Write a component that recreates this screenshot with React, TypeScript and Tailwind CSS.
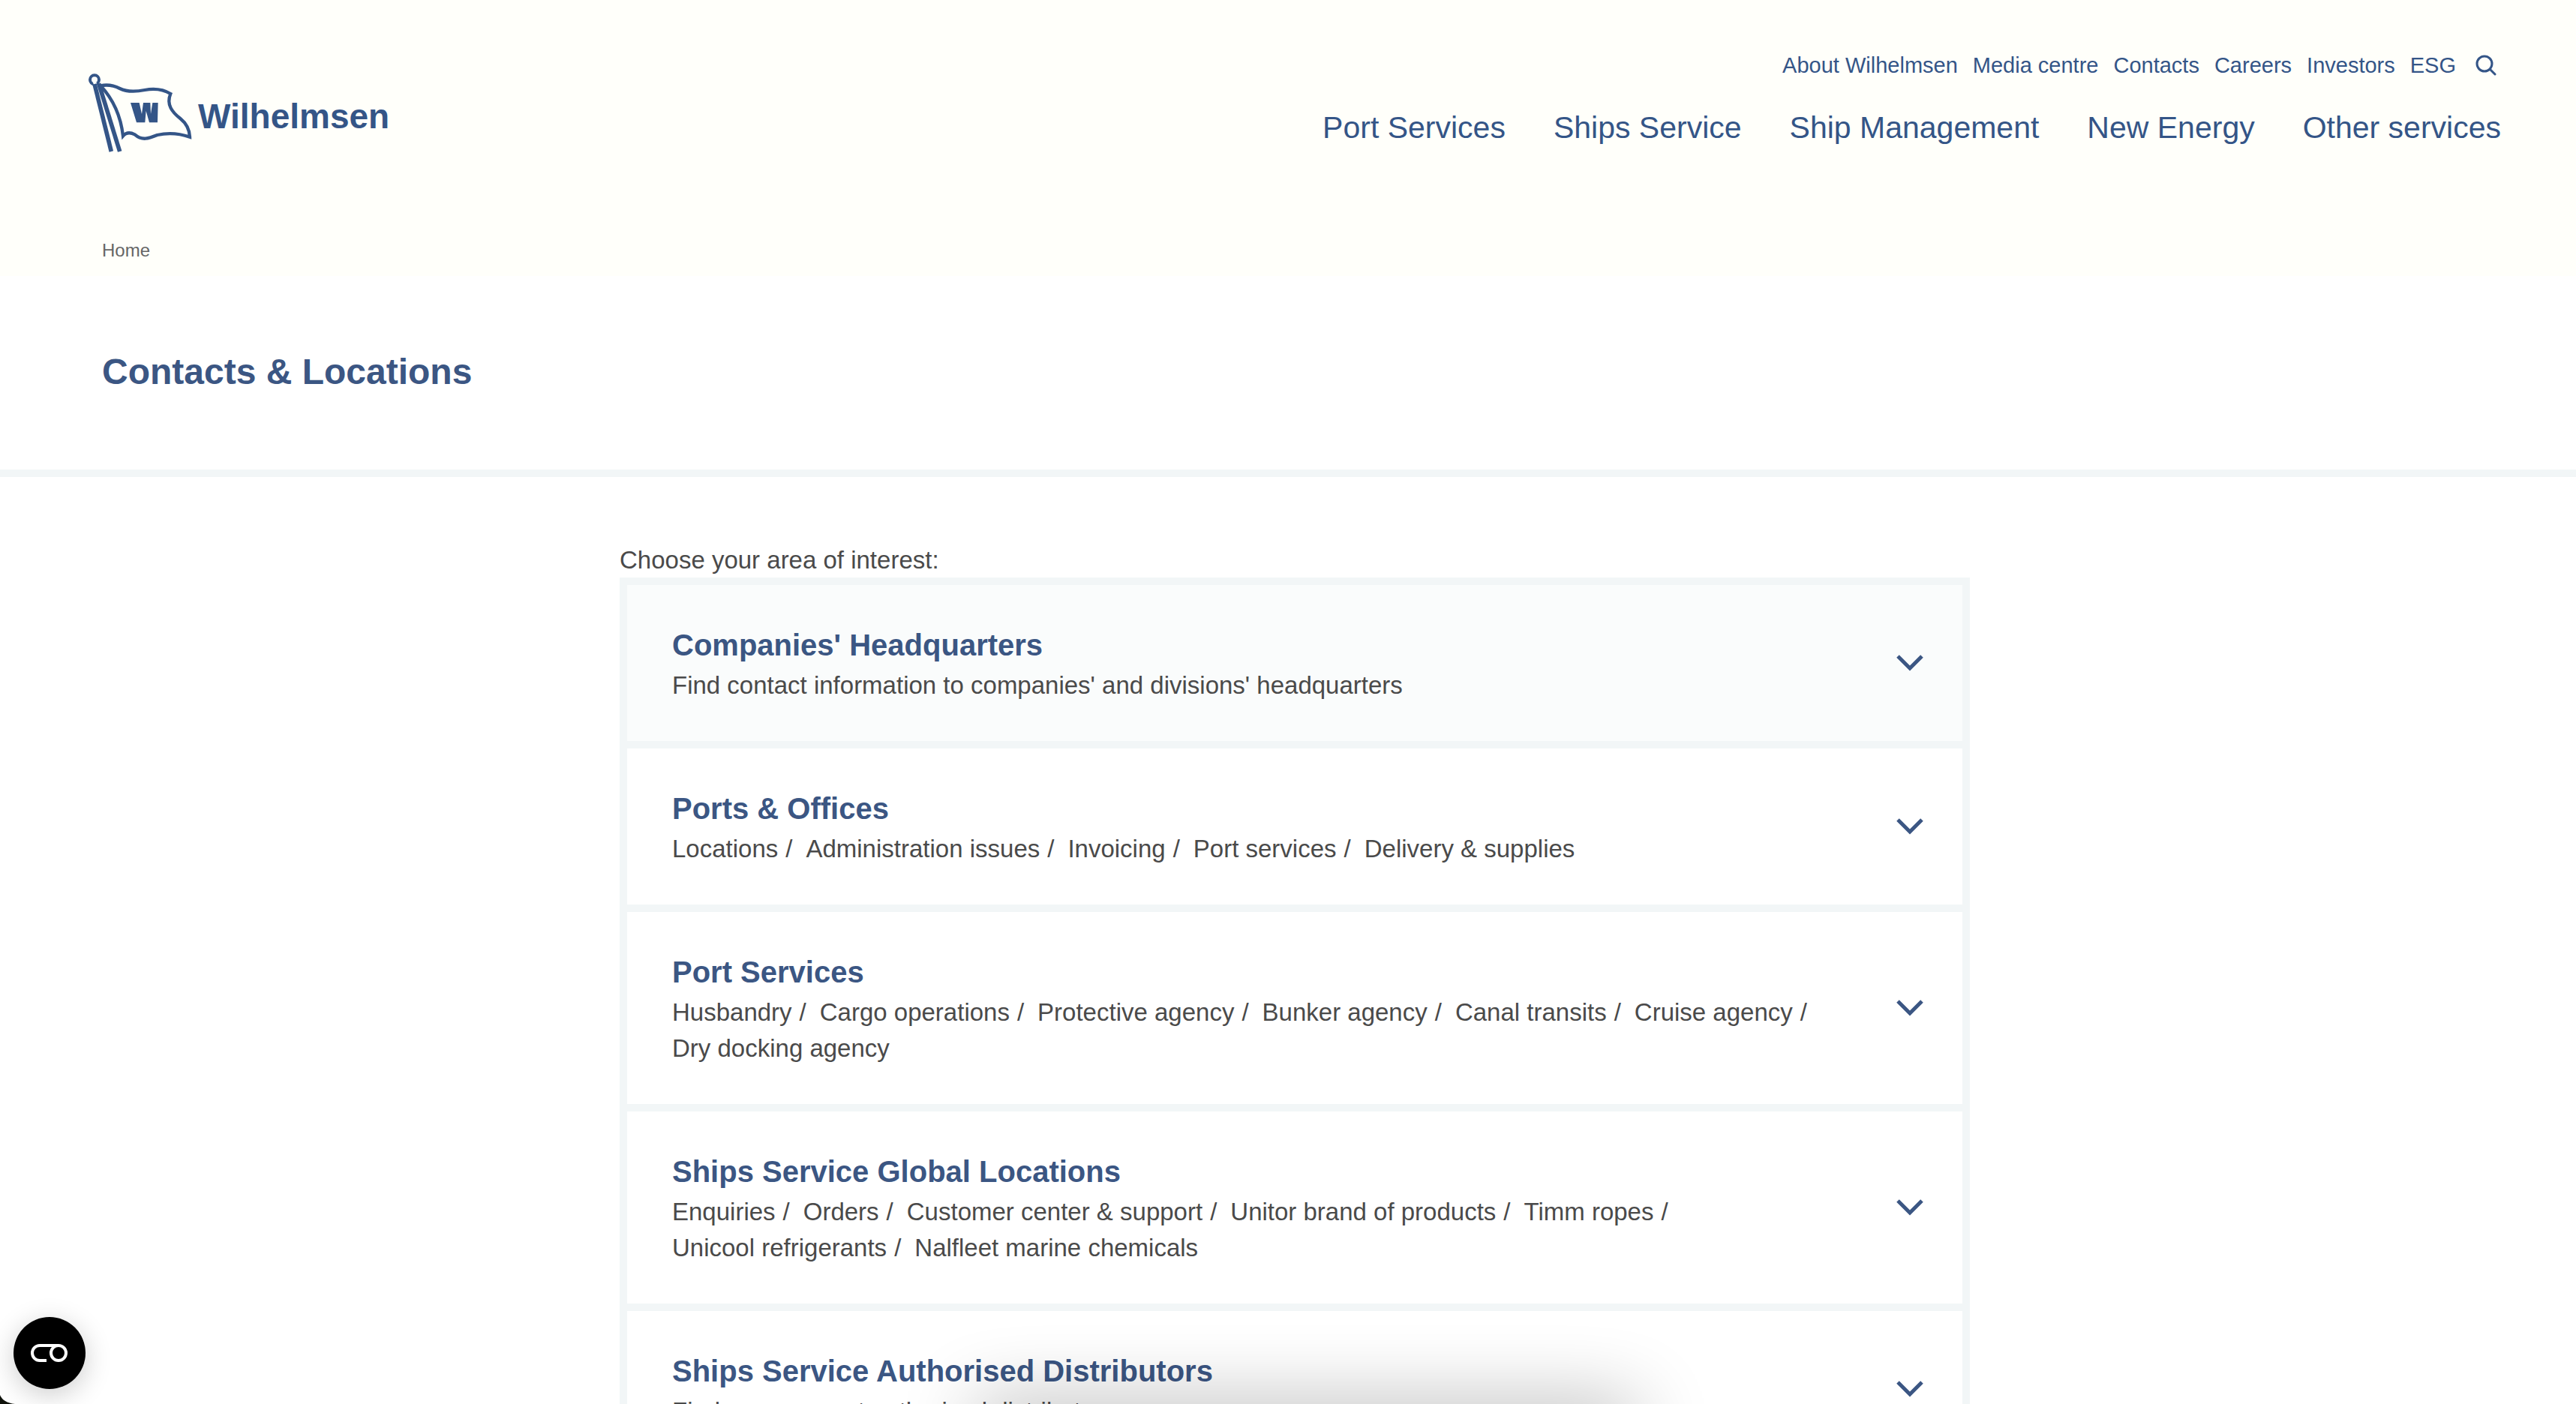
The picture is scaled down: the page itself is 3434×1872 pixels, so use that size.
import { useState } from "react";

const topLinks = ["About Wilhelmsen", "Media centre", "Contacts", "Careers", "Investors", "ESG"];
const mainLinks = ["Port Services", "Ships Service", "Ship Management", "New Energy", "Other services"];

type Area = { title: string; topics: string[] };

const areas: Area[] = [
  { title: "Companies' Headquarters", topics: ["Find contact information to companies' and divisions' headquarters"] },
  { title: "Ports & Offices", topics: ["Locations", "Administration issues", "Invoicing", "Port services", "Delivery & supplies"] },
  {
    title: "Port Services",
    topics: ["Husbandry", "Cargo operations", "Protective agency", "Bunker agency", "Canal transits", "Cruise agency", "Dry docking agency"],
  },
  {
    title: "Ships Service Global Locations",
    topics: ["Enquiries", "Orders", "Customer center & support", "Unitor brand of products", "Timm ropes", "Unicool refrigerants", "Nalfleet marine chemicals"],
  },
  { title: "Ships Service Authorised Distributors", topics: ["Find your nearest authorised distributor"] },
];

function Logo() {
  return (
    <a href="#" aria-label="Wilhelmsen" className="flex items-start gap-[6px] text-[#345587]">
      <svg width="140" height="106" viewBox="0 0 420 318" fill="none" stroke="currentColor" aria-hidden="true">
        <circle cx="24" cy="25" r="18" strokeWidth="12" />
        <path d="M18 36 L32 36 L36 54 L24 54 Z" fill="#fffffa" stroke="none" />
        <path d="M24 42 L91 312" strokeWidth="17" />
        <path d="M41 40 L125 312" strokeWidth="17" />
        <path d="M48 49 C78 43 100 47 125 60 C155 75 190 73 225 66 C268 58 300 64 328 81 C310 125 335 155 367 180 C392 200 404 228 405 254 C350 235 310 238 275 246 C240 260 215 270 185 244 C165 234 150 236 138 250 C130 180 105 110 48 49 Z" strokeWidth="13" />
        <path d="M168 117 H203 L213 162 L219 117 H247 L249 162 L256 117 H278 L276 196 H243 L230 150 L226 196 H192 Z" fill="currentColor" stroke="none" />
      </svg>
      <span className="pt-[29px] font-['Liberation_Sans',Arial,sans-serif] text-[46px] leading-[56px] font-bold">Wilhelmsen</span>
    </a>
  );
}

function Chevron() {
  return (
    <svg width="36" height="22" viewBox="0 0 36 22" fill="none" stroke="currentColor" strokeWidth="5" aria-hidden="true">
      <path d="M2 2 L18 18 L34 2" />
    </svg>
  );
}

function AreaItem({ area, active }: { area: Area; active: boolean }) {
  const [open, setOpen] = useState(false);
  return (
    <li className={active ? "bg-[#fafcfc]" : "bg-white"}>
      <button
        type="button"
        aria-expanded={open}
        onClick={() => setOpen(!open)}
        className="flex w-full cursor-pointer items-center justify-between py-[50px] pr-[52px] pl-[60px] text-left"
      >
        <span className="block max-w-[1590px]">
          <span className="block text-[40px] leading-[60px] font-bold text-[#3b5683]">{area.title}</span>
          <span className="flex flex-wrap text-[33px] leading-[48px] text-[#4a4a4a]">
            {area.topics.map((topic, i) => (
              <span key={topic} className="flex">
                {topic}
                {i < area.topics.length - 1 && <span className="mr-[18px] ml-[10px]">/</span>}
              </span>
            ))}
          </span>
        </span>
        <span className="text-[#3b5683]">
          <Chevron />
        </span>
      </button>
    </li>
  );
}

export default function App() {
  return (
    <div className="relative h-screen overflow-hidden bg-white font-['Liberation_Sans',Arial,sans-serif] text-[#4a4a4a]">
      <header className="bg-[#fffffa] pb-[14px]">
        <div className="flex items-start justify-between pr-[100px] pl-[118px]">
          <div className="pt-[98px]">
            <Logo />
          </div>
          <div className="flex flex-col items-end pt-[66px] text-[#345587]">
            <nav aria-label="Secondary" className="flex items-center gap-[20px] text-[29px] leading-[42px]">
              {topLinks.map((l) => (
                <a key={l} href="#">{l}</a>
              ))}
              <button type="button" aria-label="Search" className="mr-[6px] ml-[6px]">
                <svg width="28" height="28" viewBox="0 0 28 28" fill="none" stroke="currentColor" strokeWidth="3" strokeLinecap="round" aria-hidden="true">
                  <circle cx="12" cy="12" r="10" />
                  <path d="M20 20 L26 26" />
                </svg>
              </button>
            </nav>
            <nav aria-label="Main" className="mt-[32px] flex gap-[64px] text-[41px] leading-[60px]">
              {mainLinks.map((l) => (
                <a key={l} href="#">{l}</a>
              ))}
            </nav>
          </div>
        </div>
        <nav aria-label="Breadcrumb" className="mt-[110px] pl-[136px] text-[24px] leading-[40px] text-[#666666]">
          <a href="#">Home</a>
        </nav>
      </header>

      <section className="border-b-[10px] border-[#f2f6f7] px-[136px] pt-[92px] pb-[94px]">
        <h1 className="text-[48px] leading-[72px] font-bold text-[#3b5683]">Contacts &amp; Locations</h1>
      </section>

      <main className="pt-[88px] pl-[18px]">
        <div className="mx-auto max-w-[1800px]">
          <p className="text-[33px] leading-[46px]">Choose your area of interest:</p>
          <ul className="flex flex-col gap-[10px] border-[10px] border-[#f2f6f7] bg-[#f2f6f7]">
            {areas.map((area, i) => (
              <AreaItem key={area.title} area={area} active={i === 0} />
            ))}
          </ul>
        </div>
      </main>

      <button
        type="button"
        aria-label="Cookie settings"
        className="absolute bottom-[20px] left-[18px] flex size-[96px] items-center justify-center rounded-full bg-black text-white shadow-[0_8px_36px_rgba(0,0,0,0.2)]"
      >
        <svg width="50" height="24" viewBox="0 0 50 24" fill="none" stroke="currentColor" strokeWidth="4" aria-hidden="true">
          <path d="M21 22 H12 A10 10 0 0 1 12 2 H37" />
          <circle cx="37" cy="12" r="10" />
        </svg>
      </button>

      <div className="pointer-events-none absolute -bottom-[60px] left-[1300px] h-[60px] w-[880px] shadow-[0_0_100px_rgba(0,0,0,0.32)]" />
      <svg className="absolute bottom-0 left-0" width="20" height="12" viewBox="0 0 20 12" aria-hidden="true">
        <path d="M0 0 Q4 10 20 12 H0 Z" fill="#10130c" />
      </svg>
    </div>
  );
}
